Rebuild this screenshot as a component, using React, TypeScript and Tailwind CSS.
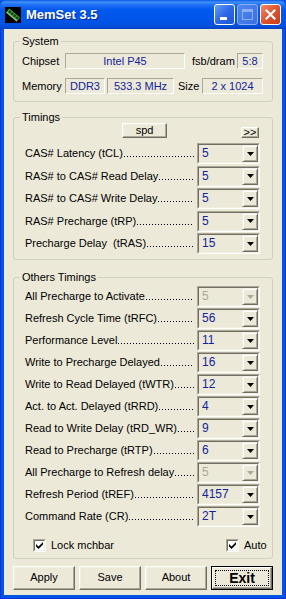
import React from "react";

// MemSet 3.5 — fenêtre XP (Luna) : barre de titre, 3 groupes (System / Timings / Others Timings)
// et la rangée de boutons du bas. Combos et boutons au style "classique" 3D.

const TIMINGS: { label: string; value: string }[] = [
  { label: "CAS# Latency (tCL)", value: "5" },
  { label: "RAS# to CAS# Read Delay", value: "5" },
  { label: "RAS# to CAS# Write Delay", value: "5" },
  { label: "RAS# Precharge (tRP)", value: "5" },
  { label: "Precharge Delay  (tRAS)", value: "15" },
];

const OTHERS: { label: string; value: string; disabled?: boolean }[] = [
  { label: "All Precharge to Activate", value: "5", disabled: true },
  { label: "Refresh Cycle Time (tRFC)", value: "56" },
  { label: "Performance Level", value: "11" },
  { label: "Write to Precharge Delayed", value: "16" },
  { label: "Write to Read Delayed (tWTR)", value: "12" },
  { label: "Act. to Act. Delayed (tRRD)", value: "4" },
  { label: "Read to Write Delay (tRD_WR)", value: "9" },
  { label: "Read to Precharge (tRTP)", value: "6" },
  { label: "All Precharge to Refresh delay", value: "5", disabled: true },
  { label: "Refresh Period (tREF)", value: "4157" },
  { label: "Command Rate (CR)", value: "2T" },
];

function TitleBar() {
  return (
    <div className="flex h-[29px] shrink-0 items-center rounded-t-[7px] bg-[linear-gradient(to_bottom,#0a58e6_0px,#3f8ff8_2px,#1d6ff4_5px,#0058ee_10px,#0055e8_20px,#0050dd_26px,#0841c2_29px)] pl-[5px] pr-[5px]">
      <svg width="16" height="16" viewBox="0 0 16 16" className="shrink-0">
        <rect width="16" height="16" fill="#000" />
        <g transform="rotate(40 8 8)">
          <rect x="1" y="5.5" width="14" height="5" fill="#3aa53a" />
          <rect x="1" y="9.5" width="14" height="1" fill="#b8b8a0" />
          <rect x="2.5" y="6.3" width="2.2" height="2.4" fill="#0f3f0f" />
          <rect x="5.6" y="6.3" width="2.2" height="2.4" fill="#0f3f0f" />
          <rect x="8.7" y="6.3" width="2.2" height="2.4" fill="#0f3f0f" />
          <rect x="11.8" y="6.3" width="2.2" height="2.4" fill="#0f3f0f" />
        </g>
      </svg>
      <span className="ml-[5px] text-[13px] font-bold text-white [text-shadow:1px_1px_#0a2a8a]">MemSet 3.5</span>
      <div className="ml-auto flex gap-[2px]">
        <div className="relative h-[21px] w-[21px] rounded-[3px] border border-white bg-[linear-gradient(135deg,#6a9df5,#2d67e6_50%,#1f56d6)]">
          <div className="absolute bottom-[4px] left-[5px] h-[3px] w-[7px] bg-white" />
        </div>
        <div className="flex h-[21px] w-[21px] items-center justify-center rounded-[3px] border border-[#8aaef0] bg-[linear-gradient(135deg,#4f86ee,#3a70e4)]">
          <div className="h-[11px] w-[11px] border border-t-[3px] border-[#8fb0f0]" />
        </div>
        <div className="flex h-[21px] w-[21px] items-center justify-center rounded-[3px] border border-white bg-[linear-gradient(135deg,#f08d6c,#e0532d_50%,#c93c19)]">
          <svg width="11" height="11" viewBox="0 0 11 11">
            <path d="M1.5 1.5 L9.5 9.5 M9.5 1.5 L1.5 9.5" stroke="#fff" strokeWidth="2.2" strokeLinecap="square" />
          </svg>
        </div>
      </div>
    </div>
  );
}

function Group({ title, className, children }: { title: string; className?: string; children: React.ReactNode }) {
  return (
    <fieldset className={`min-w-0 rounded-[3px] border border-[#d0d0bf] px-0 ${className ?? ""}`}>
      <legend className="ml-[6px] px-[2px] text-[11px] leading-[14px]">{title}</legend>
      {children}
    </fieldset>
  );
}

function StaticBox({ value, className }: { value: string; className?: string }) {
  return (
    <div
      className={`flex h-[16px] items-center justify-center border border-t-[#aca899] border-l-[#aca899] border-r-white border-b-white text-[11px] text-[#13239c] ${className ?? ""}`}
    >
      {value}
    </div>
  );
}

function ArrowButton({ disabled }: { disabled?: boolean }) {
  return (
    <div className="flex h-[17px] w-[16px] shrink-0 items-center justify-center border border-t-[#f1efe2] border-l-[#f1efe2] border-r-[#716f64] border-b-[#716f64] bg-[#ece9d8] shadow-[inset_1px_1px_#fff,inset_-1px_-1px_#aca899]">
      <svg width="7" height="4" viewBox="0 0 7 4">
        <path d="M0 0 H7 L3.5 4 Z" fill={disabled ? "#aca899" : "#000"} />
      </svg>
    </div>
  );
}

function Combo({ value, disabled }: { value: string; disabled?: boolean }) {
  return (
    <div className="flex h-[21px] w-[63px] shrink-0 border border-t-[#aca899] border-l-[#aca899] border-r-white border-b-white">
      <div className="flex min-w-0 flex-1 border border-t-[#716f64] border-l-[#716f64] border-r-[#f1efe2] border-b-[#f1efe2]">
        <span className={`min-w-0 flex-1 pl-[3px] text-[12px] leading-[17px] ${disabled ? "text-[#aca899]" : "text-[#13239c]"}`}>{value}</span>
        <ArrowButton disabled={disabled} />
      </div>
    </div>
  );
}

// Libellé + points de conduite (1px tous les 3px, posés sur la ligne de base) jusqu'au combo.
function TimingRow({ label, value, disabled }: { label: string; value: string; disabled?: boolean }) {
  return (
    <div className="flex h-[21px] items-center pl-[11px] pr-[12px]">
      <div className="mr-[3px] flex min-w-0 flex-1 items-baseline">
        <span className="shrink-0 whitespace-pre">{label}</span>
        <span className="ml-[1px] h-[1px] min-w-0 flex-1 bg-[linear-gradient(to_right,#000_1px,transparent_1px)] bg-[length:3px_1px]" />
      </div>
      <Combo value={value} disabled={disabled} />
    </div>
  );
}

function CheckBox({ label, className }: { label: string; className?: string }) {
  return (
    <div className={`flex items-center ${className ?? ""}`}>
      <div className="flex h-[13px] w-[13px] border border-t-[#aca899] border-l-[#aca899] border-r-white border-b-white">
        <div className="flex flex-1 items-center justify-center border border-t-[#716f64] border-l-[#716f64] border-r-[#f1efe2] border-b-[#f1efe2] bg-white">
          <svg width="7" height="7" viewBox="0 0 7 7">
            <path d="M0 2 L2.5 4.5 L7 0 V2.5 L2.5 7 L0 4.5 Z" fill="#000" />
          </svg>
        </div>
      </div>
      <span className="ml-[5px]">{label}</span>
    </div>
  );
}

function Btn({ children, className }: { children: React.ReactNode; className?: string }) {
  return (
    <button
      type="button"
      className={`flex h-[24px] w-[62px] items-center justify-center border border-t-white border-l-white border-r-[#716f64] border-b-[#716f64] bg-[#ece9d8] text-[11px] shadow-[inset_-1px_-1px_#aca899,inset_1px_1px_#f1efe2] ${className ?? ""}`}
    >
      {children}
    </button>
  );
}

export default function App() {
  return (
    <div className="flex h-[599px] w-[286px] flex-col bg-[#0055e5] font-['Liberation_Sans',Arial,sans-serif] text-[11px] text-black">
      <TitleBar />
      <div className="flex flex-1 flex-col border-x border-b border-[#0831d9] bg-[#0055e5] px-[3px] pb-[3px]">
        <div className="flex flex-1 flex-col bg-[#ece9d8] px-[9px]">
          <Group title="System" className="mt-[5px] pb-[7px]">
            <div className="mt-[5px] flex items-center pl-[8px]">
              <span className="w-[43px]">Chipset</span>
              <StaticBox value="Intel P45" className="w-[120px]" />
              <span className="ml-[7px] w-[45px]">fsb/dram</span>
              <StaticBox value="5:8" className="w-[26px]" />
            </div>
            <div className="mt-[8px] flex items-center pl-[8px]">
              <span className="w-[43px]">Memory</span>
              <StaticBox value="DDR3" className="w-[40px]" />
              <StaticBox value="533.3 MHz" className="ml-[2px] w-[67px]" />
              <span className="ml-[4px] w-[24px]">Size</span>
              <StaticBox value="2 x 1024" className="w-[61px]" />
            </div>
          </Group>

          <Group title="Timings" className="mt-[8px] pb-[5px]">
            <div className="-mt-[1px] flex h-[15px] items-end">
              <Btn className="ml-[108px] !h-[15px] !w-[45px]">spd</Btn>
              <Btn className="ml-[74px] !h-[11px] !w-[18px] text-[10px] leading-none">&gt;&gt;</Btn>
            </div>
            <div className="mt-[5px] flex flex-col gap-[1.5px]">
              {TIMINGS.map((t) => (
                <TimingRow key={t.label} label={t.label} value={t.value} />
              ))}
            </div>
          </Group>

          <Group title="Others Timings" className="mt-[10px] pb-[4px]">
            <div className="mt-[2px] flex flex-col gap-[1px]">
              {OTHERS.map((t) => (
                <TimingRow key={t.label} label={t.label} value={t.value} disabled={t.disabled} />
              ))}
            </div>
            <div className="mt-[10px] flex items-center pl-[19px]">
              <CheckBox label="Lock mchbar" />
              <CheckBox label="Auto" className="ml-[112px]" />
            </div>
          </Group>

          <div className="mt-[7px] flex gap-[4px]">
            <Btn>Apply</Btn>
            <Btn>Save</Btn>
            <Btn>About</Btn>
            <button type="button" className="h-[24px] w-[62px] border border-black bg-[#ece9d8] p-0">
              <div className="h-full w-full border border-t-white border-l-white border-r-[#716f64] border-b-[#716f64] p-[2px] shadow-[inset_-1px_-1px_#aca899]">
                <div className="flex h-full items-center justify-center border border-dotted border-black text-[14px] font-bold leading-none">
                  Exit
                </div>
              </div>
            </button>
          </div>
        </div>
      </div>
    </div>
  );
}
